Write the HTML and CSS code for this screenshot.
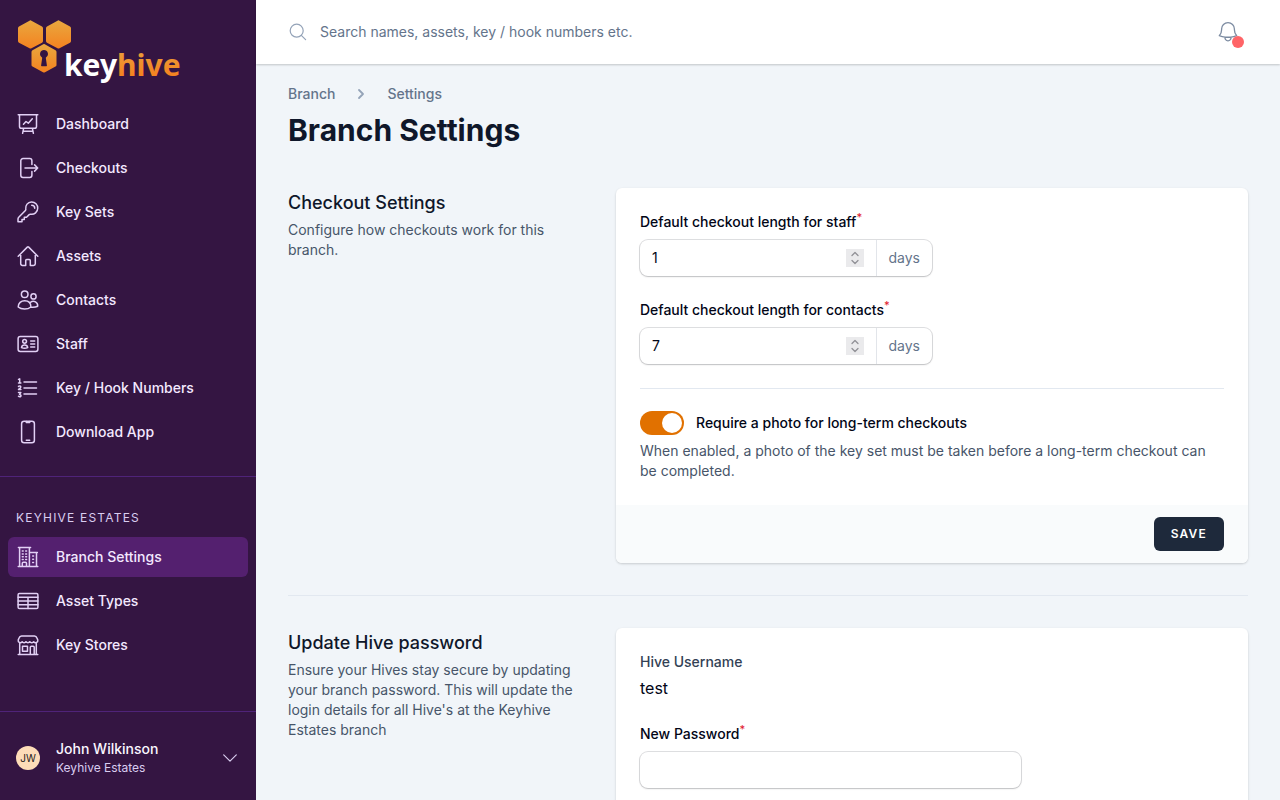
FILE: index.html
```html
<!DOCTYPE html>
<html lang="en">
<head>
<meta charset="utf-8">
<meta name="viewport" content="width=device-width, initial-scale=1">
<title>Branch Settings</title>
<link rel="stylesheet" href="styles.css">
</head>
<body>
<div class="app">
  <aside class="sidebar">
    <a class="logo" href="#" aria-label="keyhive">
      <svg width="168" height="68" viewBox="0 0 168 68">
        <defs>
          <linearGradient id="hex" x1="0" y1="0" x2="0" y2="1"><stop offset="0" stop-color="#e9a83f"/><stop offset="1" stop-color="#f48220"/></linearGradient>
          <linearGradient id="word" x1="0" y1="36" x2="0" y2="60" gradientUnits="userSpaceOnUse"><stop offset="0" stop-color="#eb9c38"/><stop offset="1" stop-color="#f48220"/></linearGradient>
        </defs>
        <g fill="url(#hex)" stroke-linejoin="round">
          <path d="M14.500 4.300 26 10.600Q27 11.200 27 12.300V25Q27 26.200 26 26.700L15.500 32.300Q14.500 32.800 13.500 32.300L3 26.700Q2 26.200 2 25V12.300Q2 11.200 3 10.600L13.500 4.700Q14 4.100 14.500 4.300Z"/>
          <path d="M42.500 4.300 54 10.600Q55 11.200 55 12.300V25Q55 26.200 54 26.700L43.500 32.300Q42.500 32.800 41.500 32.300L31 26.700Q30 26.200 30 25V12.300Q30 11.200 31 10.600L41.500 4.700Q42 4.100 42.500 4.300Z"/>
          <path d="M28.300 28 39.500 34.300Q40.500 35 40.500 36V49Q40.500 50 39.500 50.600L29 56.300Q28 56.700 27 56.300L16.500 50.600Q15.500 50 15.500 49V36Q15.500 35 16.500 34.300L27.300 28.200Q27.800 27.800 28.300 28Z"/>
        </g>
        <path d="M28 34a4 4 0 0 1 2.200 7.300q-.6.500-.3 1.200l1 7q.1.700-.6.700h-4.600q-.7 0-.6-.7l1-7q.3-.7-.3-1.200A4 4 0 0 1 28 34Z" fill="#341542"/>
        <text class="logo-text" x="48" y="60" fill="#fff">key<tspan fill="url(#word)">hive</tspan></text>
      </svg>
    </a>

    <nav class="nav" aria-label="Main">
      <a class="nav-item" href="#">
        <svg class="icon" viewBox="0 0 24 24"><path d="M2.200 2.700h19.600M3.500 2.700v11.800a1.800 1.800 0 0 0 1.800 1.800h13.400a1.800 1.800 0 0 0 1.800-1.800V2.700M7.600 16.300 6.600 21.300M16.400 16.300l1 5M7 19.300h10M7.500 12.200l2.500-2.700 2.300 1.700 4-4.400"/></svg>
        Dashboard</a>
      <a class="nav-item" href="#">
        <svg class="icon" viewBox="0 0 24 24"><path d="M15.900 8.500V4.800A2.200 2.200 0 0 0 13.700 2.600H7A2.200 2.200 0 0 0 4.800 4.800v14.400A2.200 2.200 0 0 0 7 21.400h6.700a2.200 2.200 0 0 0 2.200-2.200v-3.700M9 12h12.700M18.600 8.900 21.700 12l-3.100 3.100"/></svg>
        Checkouts</a>
      <a class="nav-item" href="#">
        <svg class="icon" viewBox="0 0 24 24"><path d="M15.700 5.300a3 3 0 0 1 3 3m3 0a6 6 0 0 1-7 5.900c-.6-.1-1.200 0-1.500.4L10.500 17.300H8.300v2.200H6v2.200H2v-2.800c0-.6.200-1.200.7-1.600l6.700-6.900c.4-.4.500-1 .4-1.500A6 6 0 1 1 21.700 8.300Z"/></svg>
        Key Sets</a>
      <a class="nav-item" href="#">
        <svg class="icon" viewBox="0 0 24 24"><path d="M2.200 12.200 11.300 3.100q.7-.6 1.400 0l9.100 9.100M4.700 9.800v9.900a1.700 1.700 0 0 0 1.700 1.700h3.300v-5a1 1 0 0 1 1-1h2.600a1 1 0 0 1 1 1v5h3.300a1.700 1.700 0 0 0 1.700-1.700V9.800"/></svg>
        Assets</a>
      <a class="nav-item" href="#">
        <svg class="icon" viewBox="0 0 24 24"><circle cx="8.700" cy="6.200" r="3.300"/><circle cx="17.500" cy="8.400" r="2.600"/><path d="M2.200 19c0-4 2.900-6.300 6.500-6.300s6.200 2.300 6.200 6.300c-1.600 1.300-3.900 2-6.300 2s-4.900-.7-6.400-2ZM14.900 19.100c2.600.3 4.900 0 6.800-.9.300-3.900-3.800-6.200-7.300-3.900"/></svg>
        Contacts</a>
      <a class="nav-item" href="#">
        <svg class="icon" viewBox="0 0 24 24"><rect x="2.100" y="4.500" width="19.800" height="15" rx="2.200"/><circle cx="8.600" cy="9.300" r="1.900"/><path d="M5.500 15.600c.2-1.600 1.400-2.600 3.100-2.600s2.900 1 3.100 2.600c-2 .9-4.300.9-6.200 0ZM14.700 9h4M14.700 12h4M14.700 15h4"/></svg>
        Staff</a>
      <a class="nav-item" href="#">
        <svg class="icon" viewBox="0 0 24 24"><path d="M8 6h12.500M8 12h12.500M8 18h12.500M2.500 3.400l1.200-.5v4M2.500 6.900h2.400M2.500 10.400c1-.9 2.400-.4 2.300.6 0 1-1.400 1.500-2.300 2.500h2.400M2.500 16.600h2.300L3.500 18.400c2 0 1.900 2.400.3 2.400q-.8 0-1.300-.5"/></svg>
        Key / Hook Numbers</a>
      <a class="nav-item" href="#">
        <svg class="icon" viewBox="0 0 24 24"><rect x="5.600" y="1.200" width="12.800" height="21.600" rx="2.500"/><path d="M10.300 1.400v1.200h3.400V1.400M10.300 20.300h3.400"/></svg>
        Download App</a>
    </nav>

    <nav class="nav nav-branch" aria-labelledby="branch-name">
      <h2 class="nav-title" id="branch-name">KEYHIVE ESTATES</h2>
      <a class="nav-item nav-item-active" href="#" aria-current="page">
        <svg class="icon" viewBox="0 0 24 24"><path d="M2.200 21.400h19.600M2.400 2.600h12.200M3.600 2.600v18.800M13.400 2.600v18.800M13.400 7.600h8M20.500 7.600v13.800M6.300 21.400v-3.200a1 1 0 0 1 1-1h2.200a1 1 0 0 1 1 1v3.200"/><path d="M6.300 6h.9M9.700 6h.9M6.300 8.900h.9M9.700 8.900h.9M6.300 11.800h.9M9.700 11.800h.9M6.300 14.600h.9M9.700 14.600h.9M16.700 11h.8M16.700 14.300h.8M16.700 17.600h.8"/></svg>
        Branch Settings</a>
      <a class="nav-item" href="#">
        <svg class="icon" viewBox="0 0 24 24"><rect x="2.100" y="4.500" width="19.800" height="15" rx="1.300"/><path d="M2.100 8.300h19.800M2.100 12h19.800M2.100 15.800h19.800M12 8.300v11.200"/></svg>
        Asset Types</a>
      <a class="nav-item" href="#">
        <svg class="icon" viewBox="0 0 24 24"><path d="M2.200 21.400h19.600M3.700 10v11.400M20.300 10v11.400M5.500 2.900h13c1.400 0 2.100 1 2.500 2.200l.8 1.900c.5 2.600-2.600 3.600-4.200 1.700-1.400 1.500-2.900 1.500-3.800 0-1 1.500-2.800 1.500-3.800 0-.9 1.500-2.400 1.500-3.800 0C4.800 10.600 1.700 9.600 2.200 7L3 5.100c.4-1.200 1.100-2.200 2.500-2.200ZM6.500 13.200h5v5h-5zM14.300 21.400v-7.200a1 1 0 0 1 1-1h1.900a1 1 0 0 1 1 1v7.200"/></svg>
        Key Stores</a>
    </nav>

    <button class="account" type="button">
      <span class="avatar">JW</span>
      <span class="account-text">
        <span class="account-name">John Wilkinson</span>
        <span class="account-branch">Keyhive Estates</span>
      </span>
      <svg class="account-arrow" viewBox="0 0 20 20"><path d="m3.700 6.900 6.300 6.200 6.300-6.200"/></svg>
    </button>
  </aside>

  <div class="page">
    <header class="topbar">
      <svg class="search-icon" viewBox="0 0 20 20"><circle cx="8.700" cy="8.700" r="6.500"/><path d="m13.300 13.300 4.300 4.300"/></svg>
      <input class="search" type="search" aria-label="Search" placeholder="Search names, assets, key / hook numbers etc.">
      <button class="bell" type="button" aria-label="Notifications">
        <svg viewBox="0 0 24 24"><path d="M14.900 17.100c2-.2 3.900-.7 5.800-1.400a9 9 0 0 1-2.300-6V9A6.400 6.400 0 0 0 5.600 9v.7a9 9 0 0 1-2.300 6c1.800.7 3.800 1.200 5.800 1.400m5.800 0q-2.900.3-5.800 0m5.800 0a3 3 0 1 1-5.800 0"/></svg>
        <span class="bell-dot"></span>
      </button>
    </header>

    <main class="content">
      <nav class="breadcrumbs" aria-label="Breadcrumb">
        <a href="#">Branch</a>
        <svg viewBox="0 0 20 20"><path d="m8 6 4 4-4 4"/></svg>
        <a href="#">Settings</a>
      </nav>
      <h1 class="title">Branch Settings</h1>

      <section class="section">
        <div class="intro">
          <h2>Checkout Settings</h2>
          <p>Configure how checkouts work for this branch.</p>
        </div>
        <form class="card">
          <div class="card-body">
            <div class="field">
              <label for="staff-days">Default checkout length for staff<span class="required">*</span></label>
              <div class="number">
                <input id="staff-days" type="number" value="1">
                <span class="stepper">
                  <button type="button" aria-label="Increase staff days"><svg viewBox="0 0 18 9"><path d="M6 6.500 9 3.500 12 6.500"/></svg></button>
                  <button type="button" aria-label="Decrease staff days"><svg viewBox="0 0 18 9"><path d="M6 2.500 9 5.500 12 2.500"/></svg></button>
                </span>
                <span class="unit">days</span>
              </div>
            </div>
            <div class="field">
              <label for="contact-days">Default checkout length for contacts<span class="required">*</span></label>
              <div class="number">
                <input id="contact-days" type="number" value="7">
                <span class="stepper">
                  <button type="button" aria-label="Increase contact days"><svg viewBox="0 0 18 9"><path d="M6 6.500 9 3.500 12 6.500"/></svg></button>
                  <button type="button" aria-label="Decrease contact days"><svg viewBox="0 0 18 9"><path d="M6 2.500 9 5.500 12 2.500"/></svg></button>
                </span>
                <span class="unit">days</span>
              </div>
            </div>
            <div class="photo">
              <div class="photo-row">
                <input class="toggle" id="photo" type="checkbox" role="switch" aria-describedby="photo-help" checked>
                <label for="photo">Require a photo for long-term checkouts</label>
              </div>
              <p id="photo-help">When enabled, a photo of the key set must be taken before a long-term checkout can be completed.</p>
            </div>
          </div>
          <div class="card-footer">
            <button class="save" type="submit">SAVE</button>
          </div>
        </form>
      </section>

      <hr class="divider">

      <section class="section">
        <div class="intro">
          <h2>Update Hive password</h2>
          <p>Ensure your Hives stay secure by updating your branch password. This will update the login details for all Hive's at the Keyhive Estates branch</p>
        </div>
        <form class="card">
          <div class="card-body">
            <div class="username">
              <span class="username-label">Hive Username</span>
              <span>test</span>
            </div>
            <div class="password-grid">
              <div class="field">
                <label for="password">New Password<span class="required">*</span></label>
                <input class="text-input" id="password" type="password">
              </div>
            </div>
          </div>
        </form>
      </section>
    </main>
  </div>
</div>
</body>
</html>
```
FILE: styles.css
```css
* {
  box-sizing: border-box;
}

body {
  margin: 0;
  font-family: Inter, "Liberation Sans", sans-serif;
  font-size: 14px;
  line-height: 20px;
  color: #020617;
}

h1, h2, p {
  margin: 0;
}

a {
  color: inherit;
  text-decoration: none;
}

button, input {
  font: inherit;
  color: inherit;
}

button {
  border: 0;
  padding: 0;
  background: none;
  cursor: pointer;
}

svg {
  display: block;
  fill: none;
  stroke-linecap: round;
  stroke-linejoin: round;
}

.app {
  display: grid;
  grid-template-columns: 256px minmax(0, 1fr);
  height: 100vh;
}

/* Sidebar */
.sidebar {
  display: flex;
  flex-direction: column;
  min-height: 0;
  overflow: hidden;
  background: #341542;
  color: #f3e8ff;
}

.logo {
  padding: 16px 16px 20px;
}

.logo-text {
  font-family: "Noto Sans", "Open Sans", sans-serif;
  font-size: 30px;
  font-weight: 700;
}

.nav {
  display: flex;
  flex-direction: column;
  gap: 4px;
  padding: 0 8px 24px;
}

.nav-branch {
  padding-top: 32px;
  border-top: 1px solid #4f2379;
}

.nav-title {
  padding: 0 8px;
  margin-bottom: 6px;
  font-size: 12px;
  line-height: 18px;
  font-weight: 400;
  letter-spacing: 1.2px;
  color: #d9cdf0;
}

.nav-item {
  display: flex;
  align-items: center;
  gap: 16px;
  height: 40px;
  padding: 0 8px;
  border-radius: 6px;
  font-weight: 500;
}

.nav-item-active {
  background: #54206f;
}

.icon {
  width: 24px;
  height: 24px;
  stroke: #e2d0f5;
  stroke-width: 1.5;
}

.account {
  display: flex;
  align-items: center;
  gap: 16px;
  height: 89px;
  flex: none;
  margin-top: auto;
  padding: 4px 16px 0;
  border-top: 1px solid #4f2379;
  text-align: left;
}

.avatar {
  display: grid;
  place-items: center;
  width: 24px;
  height: 24px;
  border-radius: 50%;
  background: #fedcb8;
  color: #1e1b1b;
  font-size: 10px;
}

.account-text {
  display: flex;
  flex: 1;
  flex-direction: column;
}

.account-name {
  font-weight: 500;
  color: #faf5ff;
}

.account-branch {
  font-size: 12px;
  line-height: 18px;
  color: #d9cdf0;
}

.account-arrow {
  width: 20px;
  height: 20px;
  stroke: #d9cdf0;
  stroke-width: 1.2;
}

/* Page */
.page {
  display: flex;
  flex-direction: column;
  min-height: 0;
  background: #f1f5f9;
}

.topbar {
  display: flex;
  align-items: center;
  flex: none;
  height: 64px;
  padding: 0 40px 0 32px;
  background: #fff;
  box-shadow: 0 1px 2px rgb(0 0 0 / 20%);
  z-index: 1;
}

.search-icon {
  width: 20px;
  height: 20px;
  stroke: #94a3b8;
  stroke-width: 1.2;
}

.search {
  flex: 1;
  height: 62px;
  margin-bottom: 2px;
  padding: 0 12px;
  border: 0;
  outline: 0;
  background: transparent;
}

.search::placeholder {
  color: #64748b;
}

.bell {
  position: relative;
}

.bell svg {
  width: 24px;
  height: 24px;
  stroke: #7c8ba1;
  stroke-width: 1.3;
}

.bell-dot {
  position: absolute;
  right: -4px;
  bottom: -4px;
  width: 12px;
  height: 12px;
  border-radius: 50%;
  background: #ff6467;
}

.content {
  flex: 1;
  min-height: 0;
  padding: 20px 32px;
  overflow-y: auto;
  scrollbar-width: none;
}

.breadcrumbs {
  display: flex;
  align-items: center;
  gap: 16px;
  font-weight: 500;
  color: #64748b;
}

.breadcrumbs svg {
  width: 20px;
  height: 20px;
  stroke: #94a3b8;
  stroke-width: 1.8;
}

.title {
  margin: 8px 0 40px;
  font-size: 30px;
  line-height: 36px;
  font-weight: 700;
  color: #0f172a;
}

.section {
  display: grid;
  grid-template-columns: repeat(3, minmax(0, 1fr));
  gap: 24px;
}

.intro {
  padding-right: 16px;
}

.intro h2 {
  margin-bottom: 2px;
  font-size: 18px;
  line-height: 30px;
  font-weight: 500;
  color: #0f172a;
}

.intro p, .photo p {
  color: #475569;
}

.card {
  grid-column: span 2;
  border-radius: 6px;
  background: #fff;
  box-shadow: 0 1px 3px rgb(0 0 0 / 10%), 0 1px 2px rgb(0 0 0 / 8%);
  overflow: hidden;
}

.card-body {
  display: flex;
  flex-direction: column;
  gap: 24px;
  padding: 24px;
}

.field {
  display: flex;
  flex-direction: column;
  gap: 8px;
}

.field label, .photo label {
  font-weight: 500;
}

.required {
  font-size: 11px;
  line-height: 0;
  vertical-align: super;
  color: #e11d2e;
}

.number, .text-input {
  height: 36px;
  border: 0;
  border-radius: 8px;
  background: #fff;
  box-shadow: 0 0 0 1px rgb(2 6 23 / 13%), 0 1px 2px rgb(0 0 0 / 14%);
}

.number {
  display: flex;
  align-items: center;
  width: 292px;
}

.number input {
  flex: 1;
  min-width: 0;
  padding: 0 12px;
  border: 0;
  outline: 0;
  background: transparent;
  appearance: textfield;
}

.stepper {
  display: flex;
  flex-direction: column;
  margin-right: 12px;
}

.stepper button {
  width: 18px;
  height: 9px;
  background: #eaeaec;
}

.stepper svg {
  width: 18px;
  height: 9px;
  stroke: #929296;
  stroke-width: 1.3;
}

.unit {
  height: 36px;
  padding: 0 12px;
  border-left: 1px solid #e2e5ea;
  line-height: 36px;
  color: #64748b;
}

.password-grid {
  display: grid;
  grid-template-columns: repeat(6, minmax(0, 1fr));
  gap: 24px;
}

.password-grid .field {
  grid-column: span 4;
}

.photo {
  display: flex;
  flex-direction: column;
  gap: 6px;
  padding-top: 22px;
  border-top: 1px solid #e2e8f0;
}

.photo-row {
  display: flex;
  align-items: center;
  gap: 12px;
}

.toggle {
  display: flex;
  justify-content: flex-end;
  width: 44px;
  height: 24px;
  margin: 0;
  padding: 2px;
  border-radius: 12px;
  background: #e17100;
  appearance: none;
}

.toggle::before {
  content: "";
  width: 20px;
  height: 20px;
  border-radius: 50%;
  background: #fff;
}

.toggle:not(:checked) {
  justify-content: flex-start;
  background: #cbd5e1;
}

.card-footer {
  display: flex;
  justify-content: flex-end;
  padding: 12px 24px;
  background: #f9fbfc;
}

.save {
  height: 34px;
  padding: 0 17px;
  border-radius: 6px;
  background: #1e293b;
  color: #fff;
  font-size: 12px;
  font-weight: 600;
  letter-spacing: 1.2px;
}

.divider {
  margin: 32px 0;
  border: 0;
  border-top: 1px solid #e2e8f0;
}

.username {
  display: flex;
  flex-direction: column;
  gap: 4px;
  font-size: 16px;
  line-height: 24px;
}

.username-label {
  font-size: 14px;
  line-height: 20px;
  font-weight: 500;
  color: #334155;
}
```
